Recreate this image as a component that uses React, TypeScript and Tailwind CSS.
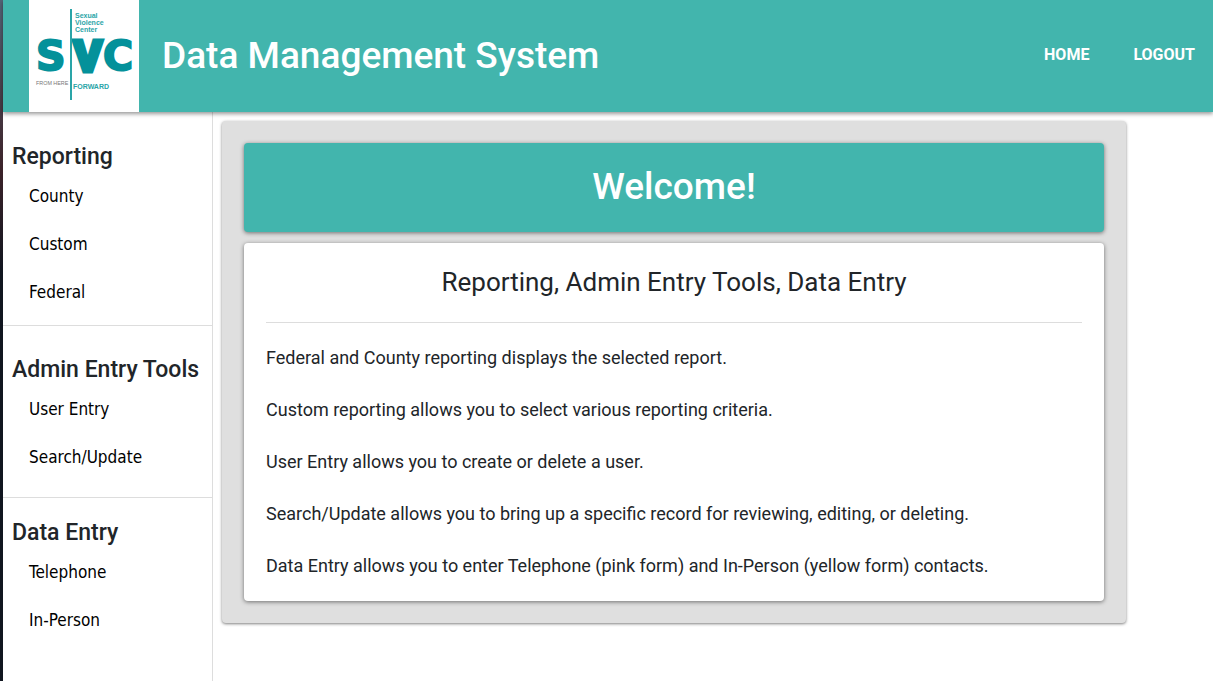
const sections = [
  { title: "Reporting", links: ["County", "Custom", "Federal"], pad: "pt-[29px] pb-2" },
  { title: "Admin Entry Tools", links: ["User Entry", "Search/Update"], pad: "pt-7 pb-[15px]" },
  { title: "Data Entry", links: ["Telephone", "In-Person"], pad: "pt-[19px] pb-4" },
];

const paragraphs = [
  "Federal and County reporting displays the selected report.",
  "Custom reporting allows you to select various reporting criteria.",
  "User Entry allows you to create or delete a user.",
  "Search/Update allows you to bring up a specific record for reviewing, editing, or deleting.",
  "Data Entry allows you to enter Telephone (pink form) and In-Person (yellow form) contacts.",
];

function Logo() {
  return (
    <svg width="110" height="112" viewBox="0 0 110 112" role="img" aria-label="Sexual Violence Center" className="shrink-0 bg-white">
      <g fill="#04919a" stroke="#04919a" fontWeight="700">
        <g fontFamily="'DejaVu Sans', sans-serif" fontSize="41" strokeWidth="2">
          <text x="7" y="70">S</text>
          <text x="74" y="70">C</text>
        </g>
        <text x="45" y="71" fontFamily="Roboto, sans-serif" fontWeight="700" fontSize="42" strokeWidth="5">V</text>
      </g>
      <rect x="39" y="8" width="2" height="92" fill="#ffffff" />
      <rect x="41" y="9" width="2" height="91" fill="#2aa5a8" />
      <g fontFamily="'Liberation Sans', Arial, sans-serif" fontWeight="700" fontSize="7" fill="#2aa5a8">
        <text x="46" y="18">Sexual</text>
        <text x="46" y="25">Violence</text>
        <text x="46" y="32">Center</text>
        <text x="44" y="89">FORWARD</text>
      </g>
      <text x="7" y="85" fontFamily="'Liberation Sans', Arial, sans-serif" fontSize="5.4" fill="#777777">FROM HERE</text>
    </svg>
  );
}

export default function App() {
  return (
    <div className="flex min-h-screen bg-white font-[Roboto,sans-serif] text-[#212529]">
      <div className="w-[3px] shrink-0 bg-linear-to-b from-[#536477] via-[#3b2229] via-25% to-[#10151f] to-40%" />
      <div className="flex min-w-0 flex-1 flex-col">
        <header className="relative flex h-28 items-center bg-[#42b5ad] pr-[18px] pl-[26px] text-white shadow-[0_2px_4px_rgba(0,0,0,0.4)]">
          <Logo />
          <h1 className="ml-[23px] text-[37px] leading-[48px] font-medium">Data Management System</h1>
          <nav className="ml-auto flex gap-11 pb-0.5 text-base font-bold">
            <a href="#home">HOME</a>
            <a href="#logout">LOGOUT</a>
          </nav>
        </header>
        <div className="flex flex-1">
          <aside className="w-[210px] shrink-0 border-r border-[#dddddd]">
            {sections.map((s, i) => (
              <section key={s.title} className={`${s.pad} ${i < sections.length - 1 ? "border-b border-[#dddddd]" : ""}`}>
                <h2 className="pl-[9px] text-[23px] leading-8 font-medium whitespace-nowrap">{s.title}</h2>
                <ul className="pl-[26px] font-['DejaVu_Sans_Condensed','DejaVu_Sans',sans-serif] text-[17px] text-black">
                  {s.links.map((l) => (
                    <li key={l} className="flex h-12 items-start pt-[11px]">
                      <a href="#section" className="leading-6">{l}</a>
                    </li>
                  ))}
                </ul>
              </section>
            ))}
          </aside>
          <main className="min-w-0 flex-1 pt-[9px] pr-[87px] pl-[9px]">
            <div className="rounded bg-[#dfdfdf] p-[22px] shadow-[0_1px_3px_rgba(0,0,0,0.5)]">
              <div className="rounded-sm bg-[#42b5ad] pt-[19px] pb-5 text-center text-white shadow-[0_1px_4px_rgba(0,0,0,0.5)]">
                <h2 className="text-[37px] leading-[50px] font-medium">Welcome!</h2>
              </div>
              <article className="mt-[11px] rounded-sm bg-white p-[22px] shadow-[0_1px_4px_rgba(0,0,0,0.5)]">
                <h3 className="text-center text-[26px] leading-[34px]">Reporting, Admin Entry Tools, Data Entry</h3>
                <hr className="mt-[23px] mb-[22px] border-[#dddddd]" />
                <div className="flex flex-col gap-[26px] text-[18px] leading-[26px]">
                  {paragraphs.map((p) => (
                    <p key={p}>{p}</p>
                  ))}
                </div>
              </article>
            </div>
          </main>
        </div>
      </div>
    </div>
  );
}
